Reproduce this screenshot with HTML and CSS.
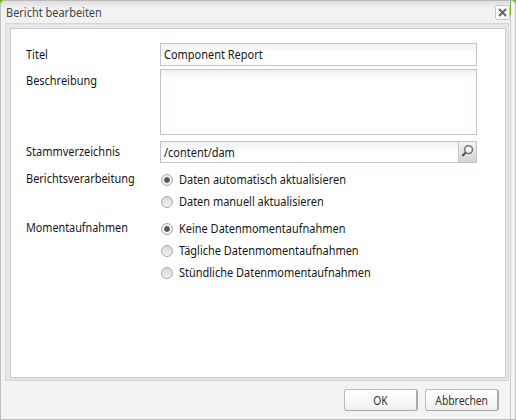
FILE: index.html
```
<!DOCTYPE html>
<html lang="de">
<head>
<meta charset="utf-8">
<title>Bericht bearbeiten</title>
<link rel="stylesheet" href="styles.css">
</head>
<body>
<div class="dialog">
  <div class="window">
    <header class="titlebar">
      <span class="heading text">Bericht bearbeiten</span>
      <span class="close"><svg width="15" height="15" viewBox="0 0 15 15"><rect x=".5" y=".5" width="14" height="14" rx="2" fill="#fafafa" stroke="#c5c5c5"/><path d="M4 4l7 7M11 4l-7 7" stroke="#666" stroke-width="2"/></svg></span>
    </header>
    <main class="panel">
      <form class="form">
        <div class="row title-row"><span class="label text">Titel</span><div class="field"><span class="text">Component Report</span></div></div>
        <div class="row description-row"><span class="label text">Beschreibung</span><div class="field area"></div></div>
        <div class="row path-row"><span class="label raised text">Stammverzeichnis</span><div class="field path"><span class="text">/content/dam</span><span class="browse"><svg width="17" height="20" viewBox="0 0 17 20"><circle cx="9.6" cy="7.6" r="3.9" fill="#f3f3f3" stroke="#777" stroke-width="1.5"/><path d="M6.8 10.5L3.2 14" stroke="#555" stroke-width="2.2"/></svg></span></div></div>
        <div class="row update-row"><span class="label raised text">Berichtsverarbeitung</span><div class="options">
          <div class="option"><i class="radio on"></i><span class="text">Daten automatisch aktualisieren</span></div>
          <div class="option"><i class="radio"></i><span class="text">Daten manuell aktualisieren</span></div>
        </div></div>
        <div class="row"><span class="label raised snapshots text">Momentaufnahmen</span><div class="options">
          <div class="option"><i class="radio on"></i><span class="text">Keine Datenmomentaufnahmen</span></div>
          <div class="option"><i class="radio"></i><span class="text">Tägliche Datenmomentaufnahmen</span></div>
          <div class="option"><i class="radio"></i><span class="text">Stündliche Datenmomentaufnahmen</span></div>
        </div></div>
      </form>
    </main>
    <footer class="actions"><div class="button"><span>OK</span></div><div class="button"><span>Abbrechen</span></div></footer>
  </div>
  <div class="edge"></div>
</div>
</body>
</html>
```
FILE: styles.css
```
* { box-sizing: border-box; }
body { margin: 0; width: 516px; height: 420px; overflow: hidden; background: linear-gradient(#79b51c 0 12px, #c4c4c4 12px); font: 12px/16px "Noto Sans", "Open Sans", sans-serif; color: #161616; }
.dialog { display: flex; width: 516px; height: 420px; border: 1px solid #c0c0c0; border-top-color: #b9b9b9; border-bottom-color: #bcbcbc; border-radius: 5px 5px 0 0; background: #f3f3f3; overflow: hidden; }
.window { width: 509px; padding-left: 4px; }
.text { display: inline-block; transform: scaleX(.914); transform-origin: left; white-space: nowrap; }
.titlebar { display: flex; justify-content: space-between; height: 22px; padding-top: 4px; margin-left: -4px; padding-left: 5px; background: linear-gradient(#dedede, #f3f3f3 8px, #f1f1f1); color: #444; }
.titlebar svg { display: block; }
.panel { width: 504px; height: 358px; padding: 4px 2px 2px 4px; border: 1px solid #d6d6d6; background: #e8e8e8; }
.form { height: 350px; padding: 14px 0 0 15px; border: 1px solid #cbcbcb; background: #fff; }
.row { display: flex; }
.label { width: 134px; padding-top: 4px; flex: none; }
.raised { padding-top: 3px; }
.snapshots { transform: scaleX(.9); }
.title-row { height: 26px; }
.description-row { height: 72px; }
.path-row { height: 27px; }
.update-row { height: 49px; }
.field { display: flex; justify-content: space-between; width: 317px; height: 23px; padding: 3px 0 0 3px; border: 1px solid #bfc4c5; background: linear-gradient(#eef1f2, #fff 10px); }
.area { height: 66px; }
.path { height: 22px; }
.browse { width: 18px; height: 20px; margin-top: -3px; border-left: 1px solid #c6c6c6; background: linear-gradient(#f2f2f2, #d4d4d8); }
.browse svg { display: block; }
.options { padding-top: 4px; }
.option { display: flex; height: 22px; padding-left: 1px; gap: 6px; }
.radio { width: 12px; height: 12px; margin-top: 2px; border: 1px solid #aaa; border-radius: 50%; background: linear-gradient(#d8d8d8, #f1f1f1); }
.on { background: radial-gradient(circle, #555 0 2.4px, #eee 3.2px); }
.actions { display: flex; justify-content: flex-end; gap: 7px; padding: 8px 11px 0 0; }
.button { width: 74px; height: 22px; border: 1px solid #bbb; border-right: 2px solid #aaa; border-bottom-color: #aaa; border-radius: 3px; background: linear-gradient(#fff, #f0f0f0); text-align: center; line-height: 22px; color: #333; }
.button span { display: inline-block; transform: scaleX(.86); }
.edge { flex: 1; border-radius: 0 4px 0 0; background: linear-gradient(#76b51b 0 14px, #cfcfcf 14px) 0 0 / 1px 100% no-repeat, #f3f3f3; }
```
